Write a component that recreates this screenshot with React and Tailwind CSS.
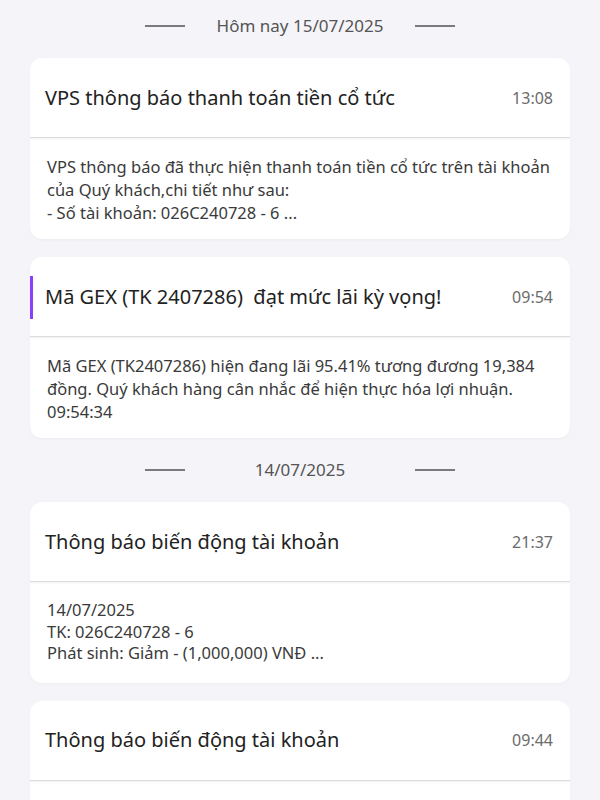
import React from "react";

const groups = [
  {
    date: "Hôm nay 15/07/2025",
    items: [
      {
        title: "VPS thông báo thanh toán tiền cổ tức",
        time: "13:08",
        body: ["VPS thông báo đã thực hiện thanh toán tiền cổ tức trên tài khoản", "của Quý khách,chi tiết như sau:", "- Số tài khoản: 026C240728 - 6 ..."],
      },
      {
        title: "Mã GEX (TK 2407286)  đạt mức lãi kỳ vọng!",
        time: "09:54",
        unread: true,
        body: ["Mã GEX (TK2407286) hiện đang lãi 95.41% tương đương 19,384", "đồng. Quý khách hàng cân nhắc để hiện thực hóa lợi nhuận.", "09:54:34"],
      },
    ],
  },
  {
    date: "14/07/2025",
    items: [
      {
        title: "Thông báo biến động tài khoản",
        time: "21:37",
        small: true,
        body: ["14/07/2025", "TK: 026C240728 - 6", "Phát sinh: Giảm - (1,000,000) VNĐ ..."],
      },
      {
        title: "Thông báo biến động tài khoản",
        time: "09:44",
        small: true,
        body: ["14/07/2025", "TK: 026C240728 - 6", "Phát sinh: Giảm - (1,000,000) VNĐ ..."],
      },
    ],
  },
];

const DateHeader = ({ label }) => (
  <div className="flex items-center justify-center h-[64px]">
    <div className="w-10 h-[1.5px] bg-[#7a7a7a]" />
    <div className="w-[230px] text-center text-[17px] text-[#555]">{label}</div>
    <div className="w-10 h-[1.5px] bg-[#7a7a7a]" />
  </div>
);

const Card = ({ item }) => (
  <div className="bg-white rounded-[12px] shadow-[0_1px_3px_rgba(0,0,0,0.04)] overflow-hidden">
    <div className="relative flex items-center justify-between h-[80px] pl-[15px] pr-[17px] border-b border-[#dcdcdc] shadow-[0_1px_2px_rgba(0,0,0,0.06)]">
      {item.unread && <div className="absolute left-0 top-[19px] w-[3px] h-[43px] bg-[#8a3ffc]" />}
      <span className="text-[20px] text-[#222] whitespace-pre">{item.title}</span>
      <span className="text-[16px] text-[#6b6b6b]">{item.time}</span>
    </div>
    <div className={`pl-[17px] pr-4 text-[16.5px] ${item.small ? "pt-[17px] pb-[19px] leading-[21.5px]" : "pt-[17px] pb-[15px] leading-[23px]"} text-[#3a3a3a]`}>
      {item.body.map((line, i) => (
        <div key={i} className="whitespace-pre">{line}</div>
      ))}
    </div>
  </div>
);

export default function App() {
  return (
    <div className="h-[800px] overflow-hidden bg-[#f4f4f9] font-['Noto_Sans',sans-serif] px-[30px]">
      {groups.map((g, gi) => (
        <div key={gi} className={gi === 0 ? "-mt-[6px]" : ""}>
          <DateHeader label={g.date} />
          <div className="flex flex-col gap-[18px]">
            {g.items.map((item, i) => (
              <Card key={i} item={item} />
            ))}
          </div>
        </div>
      ))}
    </div>
  );
}
